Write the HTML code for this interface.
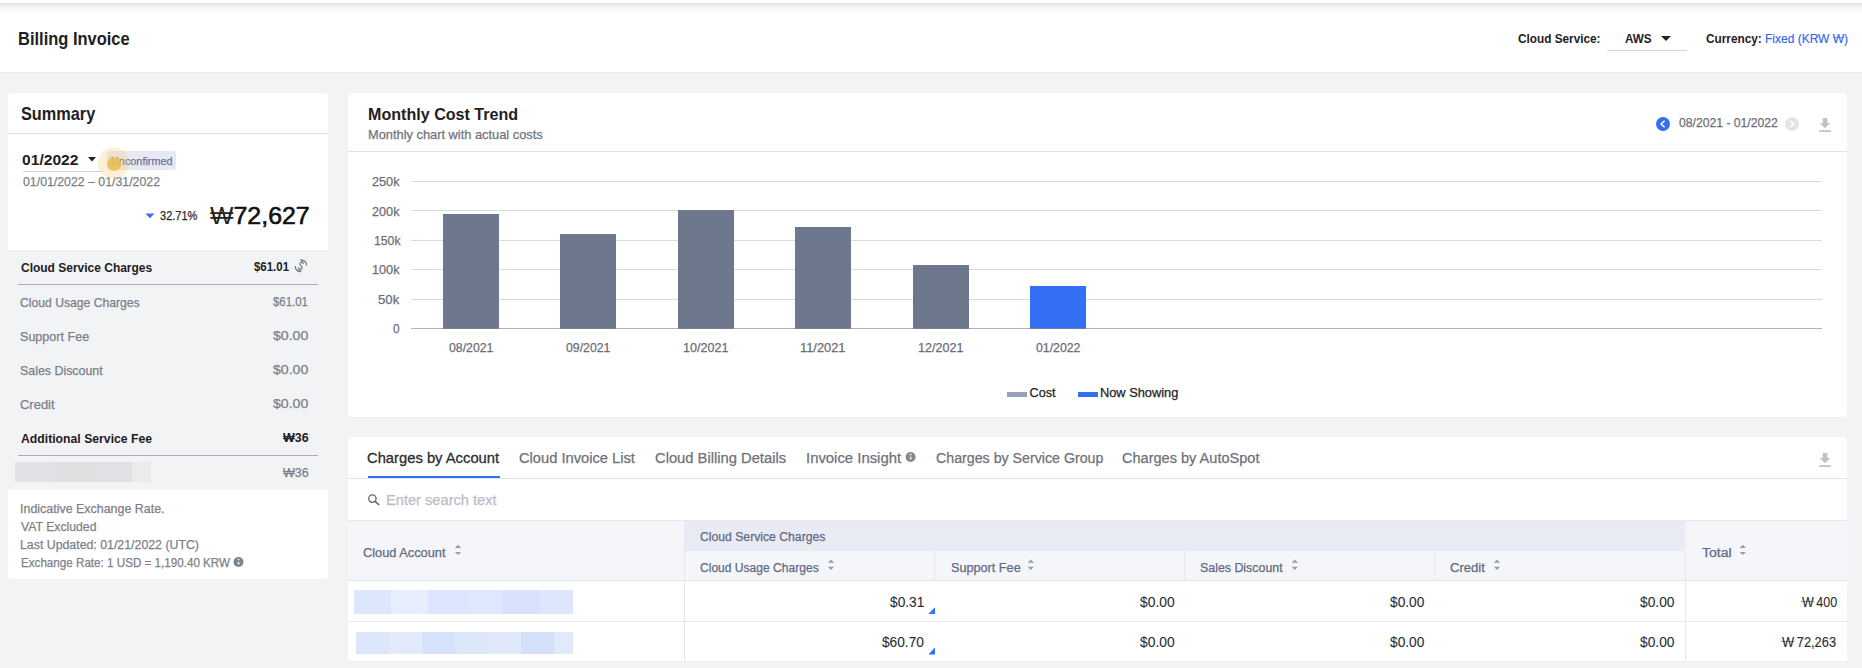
<!DOCTYPE html>
<html><head><meta charset="utf-8"><title>Billing Invoice</title>
<style>
html,body{margin:0;padding:0}
body{width:1862px;height:668px;overflow:hidden;background:#f2f3f5;position:relative;font-family:"Liberation Sans",sans-serif}
.a{position:absolute}
.t{position:absolute;white-space:pre;transform-origin:0 0;font-family:"Liberation Sans",sans-serif}
.card{position:absolute;background:#fff;border-radius:4px}
.hl{position:absolute;height:1px}
svg{position:absolute;overflow:visible}
.won{position:relative}.won::after{content:"";position:absolute;left:-0.04em;right:-0.04em;top:0.47em;border-top:0.6px solid currentColor;opacity:.5}
</style></head><body>
<!-- header -->
<div class="a" style="left:0;top:0;width:1862px;height:72px;background:#fff"></div>
<div class="a" style="left:0;top:3px;width:1862px;height:11px;background:linear-gradient(#e2e2e2,#eeeeee 25%,#f7f7f7 55%,#fdfdfd 85%,#fff)"></div>
<div class="hl" style="left:0;top:72px;width:1862px;background:#e6e8ec"></div>
<div class="hl" style="left:1607px;top:50px;width:80px;background:#cfd4de"></div>
<svg style="left:0;top:0" width="1862" height="72"><path d="M1661 36 L1671 36 L1666 41 Z" fill="#222"/></svg>

<!-- summary card -->
<div class="card" style="left:8px;top:93px;width:320px;height:157px;border-radius:4px 4px 0 0"></div>
<div class="hl" style="left:8px;top:133px;width:320px;background:#dfe2e8"></div>
<div class="hl" style="left:23px;top:171px;width:80px;background:#cdd1da"></div>
<svg style="left:0;top:0" width="340" height="600">
  <path d="M88 157 L96 157 L92 161.5 Z" fill="#222"/>
  <rect x="107" y="151" width="69" height="19" rx="3" fill="#e7eaf4"/>
  <path d="M145.5 213.5 L154.5 213.5 L150 218.3 Z" fill="#3b6ff0"/>
</svg>
<div class="hl" style="left:18px;top:284px;width:300px;background:#a8adb7"></div>
<div class="hl" style="left:18px;top:455px;width:300px;background:#a8adb7"></div>
<svg style="left:0;top:0" width="340" height="600">
  <g transform="translate(300.9 265.8)" fill="none" stroke="#75787e" stroke-width="1.2">
    <path d="M0.6 -5.7 A5.7 5.7 0 0 1 5.7 -0.3"/>
    <path d="M-5.7 0.3 A5.7 5.7 0 0 0 -0.6 5.7"/>
    <path d="M-0.3 -6.4 L2.1 -5.4 L0.3 -4.4 Z" fill="#75787e" stroke-width="0.5"/>
    <path d="M0.3 6.4 L-2.1 5.4 L-0.3 4.4 Z" fill="#75787e" stroke-width="0.5"/>
    <g transform="rotate(20) scale(1.2)" stroke-width="1.0">
      <path d="M1.5 -2.1 C1.2 -2.7 0.6 -2.9 0 -2.9 C-0.9 -2.9 -1.5 -2.4 -1.5 -1.6 C-1.5 -0.6 -0.6 -0.3 0 -0.05 C0.8 0.25 1.6 0.6 1.6 1.5 C1.6 2.4 0.9 2.9 0 2.9 C-0.7 2.9 -1.3 2.6 -1.6 2.0"/>
      <path d="M0 -4 V-2.9 M0 2.9 V4"/>
    </g>
  </g>
</svg>
<div class="a" style="left:15px;top:462px;width:39px;height:20px;background:#e1e2e5"></div>
<div class="a" style="left:54px;top:462px;width:39px;height:20px;background:#dfe0e2"></div>
<div class="a" style="left:93px;top:462px;width:39px;height:20px;background:#e0e1e4"></div>
<div class="a" style="left:132px;top:462px;width:19px;height:20px;background:#eaebed"></div>
<div class="card" style="left:8px;top:490px;width:320px;height:89px;border-radius:0 0 4px 4px"></div>
<svg style="left:0;top:0" width="340" height="600">
  <circle cx="238.5" cy="562" r="5" fill="#80838a"/>
  <rect x="237.8" y="561.9" width="1.5" height="2.6" fill="#fff"/>
  <rect x="237.8" y="558.9" width="1.5" height="1.4" fill="#fff"/>
</svg>

<!-- chart card -->
<div class="card" style="left:348px;top:93px;width:1499px;height:324px"></div>
<div class="hl" style="left:348px;top:151px;width:1499px;background:#dfe2e8"></div>
<svg style="left:0;top:0" width="1862" height="420">
  <g fill="#dadada">
    <rect x="411" y="181" width="1411" height="1"/>
    <rect x="411" y="210" width="1411" height="1"/>
    <rect x="411" y="240" width="1411" height="1"/>
    <rect x="411" y="269" width="1411" height="1"/>
    <rect x="411" y="299" width="1411" height="1"/>
  </g>
  <g fill="#6d788f">
    <rect x="443" y="214" width="56" height="114.5"/>
    <rect x="560" y="234" width="56" height="94.5"/>
    <rect x="678" y="210" width="56" height="118.5"/>
    <rect x="795" y="227" width="56" height="101.5"/>
    <rect x="913" y="265" width="56" height="63.5"/>
  </g>
  <rect x="1030" y="286" width="56" height="42.5" fill="#3370f4"/>
  <rect x="411" y="328" width="1411" height="1" fill="rgba(0,0,0,0.3)"/>
  <rect x="1007" y="392" width="20" height="5" fill="#9aa1b7"/>
  <rect x="1078" y="392" width="20" height="5" fill="#3370f4"/>
  <circle cx="1663" cy="124" r="7" fill="#3370f4"/>
  <path d="M1664.6 120.7 L1661.1 124 L1664.6 127.3" fill="none" stroke="#fff" stroke-width="1.5"/>
  <circle cx="1792" cy="124" r="7" fill="#e3e5e9"/>
  <path d="M1790.5 120.8 L1793.5 124 L1790.5 127.2" fill="none" stroke="#fff" stroke-width="1.4"/>
  <path d="M1822.8 118 H1827.3 V123 H1830.3 L1825 128.3 L1819.7 123 H1822.8 Z" fill="#bfc1c6"/>
  <rect x="1819.2" y="130.2" width="11.6" height="1.7" fill="#bfc1c6"/>
</svg>

<!-- table card -->
<div class="card" style="left:348px;top:437px;width:1499px;height:224px;border-radius:4px 4px 0 0"></div>
<div class="hl" style="left:348px;top:478px;width:1499px;background:#e3e5ec"></div>
<div class="a" style="left:348px;top:661px;width:1499px;height:7px;background:#f4f4f4;border-top:1px solid #f0f0f0;box-sizing:border-box"></div>
<div class="a" style="left:368px;top:476px;width:132px;height:2px;background:#3370f4"></div>
<svg style="left:0;top:0" width="1862" height="668">
  <circle cx="910.6" cy="457" r="5" fill="#85888f"/>
  <rect x="909.9" y="456.8" width="1.5" height="2.6" fill="#fff"/>
  <rect x="909.9" y="453.8" width="1.5" height="1.4" fill="#fff"/>
  <path d="M1822.7 453 H1827.4 V458 H1830.3 L1825 463.3 L1819.7 458 H1822.7 Z" fill="#bfc1c6"/>
  <rect x="1819.2" y="465.2" width="11.6" height="1.8" fill="#bfc1c6"/>
  <circle cx="372.4" cy="498.6" r="3.7" fill="none" stroke="#616469" stroke-width="1.3"/>
  <path d="M375.1 501.4 L379.2 505" stroke="#616469" stroke-width="1.6"/>
</svg>
<!-- table header -->
<div class="a" style="left:348px;top:520px;width:1499px;height:61px;background:#f5f6f9;border-top:1px solid #e6e8ee;border-bottom:1px solid #e3e5eb;box-sizing:border-box"></div>
<div class="a" style="left:685px;top:521px;width:999px;height:30px;background:#e8ebf3"></div>
<div class="a" style="left:684px;top:520px;width:1px;height:141px;background:#e5e7ec"></div>
<div class="a" style="left:934px;top:551px;width:1px;height:29px;background:#e5e7ec"></div>
<div class="a" style="left:1184px;top:551px;width:1px;height:29px;background:#e5e7ec"></div>
<div class="a" style="left:1434px;top:551px;width:1px;height:29px;background:#e5e7ec"></div>
<div class="a" style="left:1685px;top:520px;width:1px;height:141px;background:#e5e7ec"></div>
<div class="hl" style="left:348px;top:621px;width:1499px;background:#e6e8ee"></div>
<svg style="left:0;top:0" width="1862" height="668">
  <g fill="#989eac">
    <path d="M454.8 547.9 L461.2 547.9 L458.00 544.8 Z"/><path d="M454.8 552.0 L461.2 552.0 L458.00 555.1 Z"/>
    <path d="M827.8 562.7 L834.2 562.7 L831.00 559.6 Z"/><path d="M827.8 566.8 L834.2 566.8 L831.00 569.9 Z"/>
    <path d="M1027.6 562.7 L1034.0 562.7 L1030.80 559.6 Z"/><path d="M1027.6 566.8 L1034.0 566.8 L1030.80 569.9 Z"/>
    <path d="M1291.6 562.7 L1298.0 562.7 L1294.80 559.6 Z"/><path d="M1291.6 566.8 L1298.0 566.8 L1294.80 569.9 Z"/>
    <path d="M1493.8 562.7 L1500.2 562.7 L1497.00 559.6 Z"/><path d="M1493.8 566.8 L1500.2 566.8 L1497.00 569.9 Z"/>
    <path d="M1739.6 547.9 L1746.0 547.9 L1742.80 544.8 Z"/><path d="M1739.6 552.0 L1746.0 552.0 L1742.80 555.1 Z"/>
  </g>
  <path d="M928.3 614 L935 614 L935 607.2 Z" fill="#3370f4"/>
  <path d="M928.3 654.4 L935 654.4 L935 647.6 Z" fill="#3370f4"/>
</svg>
<!-- blurred accounts -->
<div class="a" style="left:354px;top:590px;width:37px;height:24px;background:#dce6fc"></div>
<div class="a" style="left:391px;top:590px;width:37px;height:24px;background:#e6edfd"></div>
<div class="a" style="left:428px;top:590px;width:37px;height:24px;background:#dbe5fd"></div>
<div class="a" style="left:465px;top:590px;width:37px;height:24px;background:#dee7fd"></div>
<div class="a" style="left:502px;top:590px;width:37px;height:24px;background:#d8e3fb"></div>
<div class="a" style="left:539px;top:590px;width:34px;height:24px;background:#dde6fd"></div>
<div class="a" style="left:356px;top:632px;width:33px;height:22px;background:#dbe6fb"></div>
<div class="a" style="left:389px;top:632px;width:33px;height:22px;background:#e3eafb"></div>
<div class="a" style="left:422px;top:632px;width:33px;height:22px;background:#d6e2fc"></div>
<div class="a" style="left:455px;top:632px;width:33px;height:22px;background:#dde7fa"></div>
<div class="a" style="left:488px;top:632px;width:33px;height:22px;background:#e0e8fb"></div>
<div class="a" style="left:521px;top:632px;width:33px;height:22px;background:#d4dffa"></div>
<div class="a" style="left:554px;top:632px;width:19px;height:22px;background:#e2e9fb"></div>
<div class="t" style="left:17.81px;top:30.00px;font-size:18.46px;line-height:18.46px;font-weight:700;color:#1f2023;transform:scaleX(0.8935);">Billing Invoice</div>
<div class="t" style="left:1517.70px;top:31.80px;font-size:13.66px;line-height:13.66px;font-weight:700;color:#1f2023;transform:scaleX(0.8628);">Cloud Service:</div>
<div class="t" style="left:1625.00px;top:31.80px;font-size:13.66px;line-height:13.66px;font-weight:700;color:#1f2023;transform:scaleX(0.8548);">AWS</div>
<div class="t" style="left:1705.70px;top:31.70px;font-size:13.66px;line-height:13.66px;font-weight:700;color:#1f2023;transform:scaleX(0.8651);">Currency:</div>
<div class="t" style="left:1764.82px;top:31.70px;font-size:13.66px;line-height:13.66px;font-weight:400;color:#3468ee;transform:scaleX(0.8785);-webkit-text-stroke:0.2px #3468ee">Fixed (KRW <span class="won">W</span>)</div>
<div class="t" style="left:20.58px;top:106.00px;font-size:17.73px;line-height:17.73px;font-weight:700;color:#1f2023;transform:scaleX(0.9187);">Summary</div>
<div class="t" style="left:22.07px;top:151.90px;font-size:15.12px;line-height:15.12px;font-weight:700;color:#1f2023;transform:scaleX(1.0340);">01/2022</div>
<div class="t" style="left:110.66px;top:156.90px;font-size:10.47px;line-height:10.47px;font-weight:400;color:#6d7693;transform:scaleX(1.0379);-webkit-text-stroke:0.25px currentColor">Unconfirmed</div>
<div class="t" style="left:23.40px;top:175.00px;font-size:13.08px;line-height:13.08px;font-weight:400;color:#7c7f87;transform:scaleX(0.9421);-webkit-text-stroke:0.25px currentColor">01/01/2022 – 01/31/2022</div>
<div class="t" style="left:159.78px;top:209.20px;font-size:13.37px;line-height:13.37px;font-weight:400;color:#2a2a2a;transform:scaleX(0.8250);-webkit-text-stroke:0.25px currentColor">32.71%</div>
<div class="t" style="left:209.70px;top:204.00px;font-size:24.71px;line-height:24.71px;font-weight:400;color:#111;transform:scaleX(1.0082);-webkit-text-stroke:0.6px #111"><span style="-webkit-text-stroke:0;color:#222">₩</span>72,627</div>
<div class="t" style="left:20.50px;top:261.00px;font-size:13.08px;line-height:13.08px;font-weight:700;color:#1f2023;transform:scaleX(0.9161);">Cloud Service Charges</div>
<div class="t" style="left:253.80px;top:261.10px;font-size:12.5px;line-height:12.5px;font-weight:700;color:#1f2023;transform:scaleX(0.9158);">$61.01</div>
<div class="t" style="left:19.55px;top:296.70px;font-size:12.79px;line-height:12.79px;font-weight:400;color:#7b7f8a;transform:scaleX(0.9516);-webkit-text-stroke:0.25px currentColor">Cloud Usage Charges</div>
<div class="t" style="left:19.52px;top:330.80px;font-size:12.79px;line-height:12.79px;font-weight:400;color:#7b7f8a;transform:scaleX(0.9826);-webkit-text-stroke:0.25px currentColor">Support Fee</div>
<div class="t" style="left:19.53px;top:364.90px;font-size:12.79px;line-height:12.79px;font-weight:400;color:#7b7f8a;transform:scaleX(0.9702);-webkit-text-stroke:0.25px currentColor">Sales Discount</div>
<div class="t" style="left:20.28px;top:398.60px;font-size:12.79px;line-height:12.79px;font-weight:400;color:#7b7f8a;transform:scaleX(1.0152);-webkit-text-stroke:0.25px currentColor">Credit</div>
<div class="t" style="left:20.50px;top:432.60px;font-size:12.79px;line-height:12.79px;font-weight:700;color:#1f2023;transform:scaleX(0.9562);">Additional Service Fee</div>
<div class="t" style="left:272.90px;top:294.70px;font-size:13.08px;line-height:13.08px;font-weight:400;color:#7b7f8a;transform:scaleX(0.8700);-webkit-text-stroke:0.25px currentColor">$61.01</div>
<div class="t" style="left:273.20px;top:328.70px;font-size:13.08px;line-height:13.08px;font-weight:400;color:#7b7f8a;transform:scaleX(1.0781);-webkit-text-stroke:0.25px currentColor">$0.00</div>
<div class="t" style="left:273.20px;top:362.50px;font-size:13.08px;line-height:13.08px;font-weight:400;color:#7b7f8a;transform:scaleX(1.0781);-webkit-text-stroke:0.25px currentColor">$0.00</div>
<div class="t" style="left:273.20px;top:397.00px;font-size:13.08px;line-height:13.08px;font-weight:400;color:#7b7f8a;transform:scaleX(1.0781);-webkit-text-stroke:0.25px currentColor">$0.00</div>
<div class="t" style="left:282.50px;top:430.60px;font-size:13.08px;line-height:13.08px;font-weight:700;color:#1f2023;transform:scaleX(0.9500);">₩36</div>
<div class="t" style="left:282.50px;top:465.50px;font-size:13.08px;line-height:13.08px;font-weight:400;color:#7b7f8a;transform:scaleX(0.9500);-webkit-text-stroke:0.25px currentColor">₩36</div>
<div class="t" style="left:20.45px;top:502.00px;font-size:13.08px;line-height:13.08px;font-weight:400;color:#7d8087;transform:scaleX(0.9513);-webkit-text-stroke:0.25px currentColor">Indicative Exchange Rate.</div>
<div class="t" style="left:21.40px;top:519.80px;font-size:13.08px;line-height:13.08px;font-weight:400;color:#7d8087;transform:scaleX(0.9350);-webkit-text-stroke:0.25px currentColor">VAT Excluded</div>
<div class="t" style="left:20.46px;top:537.50px;font-size:13.08px;line-height:13.08px;font-weight:400;color:#7d8087;transform:scaleX(0.9431);-webkit-text-stroke:0.25px currentColor">Last Updated: 01/21/2022 (UTC)</div>
<div class="t" style="left:20.51px;top:555.50px;font-size:13.08px;line-height:13.08px;font-weight:400;color:#7d8087;transform:scaleX(0.8897);-webkit-text-stroke:0.25px currentColor">Exchange Rate: 1 USD = 1,190.40 KRW</div>
<div class="t" style="left:368.06px;top:105.90px;font-size:17.15px;line-height:17.15px;font-weight:700;color:#1f2023;transform:scaleX(0.9386);">Monthly Cost Trend</div>
<div class="t" style="left:368.00px;top:128.80px;font-size:12.79px;line-height:12.79px;font-weight:400;color:#6f7380;transform:scaleX(1.0040);-webkit-text-stroke:0.25px currentColor">Monthly chart with actual costs</div>
<div class="t" style="left:1678.60px;top:116.20px;font-size:13.37px;line-height:13.37px;font-weight:400;color:#6c6f76;transform:scaleX(0.9111);-webkit-text-stroke:0.25px currentColor">08/2021 - 01/2022</div>
<div class="t" style="left:372.25px;top:174.90px;font-size:13.37px;line-height:13.37px;font-weight:400;color:#6b6e76;transform:scaleX(0.9500);-webkit-text-stroke:0.25px currentColor">250k</div>
<div class="t" style="left:372.25px;top:204.60px;font-size:13.37px;line-height:13.37px;font-weight:400;color:#6b6e76;transform:scaleX(0.9500);-webkit-text-stroke:0.25px currentColor">200k</div>
<div class="t" style="left:373.69px;top:234.00px;font-size:13.37px;line-height:13.37px;font-weight:400;color:#6b6e76;transform:scaleX(0.9143);-webkit-text-stroke:0.25px currentColor">150k</div>
<div class="t" style="left:372.25px;top:263.40px;font-size:13.37px;line-height:13.37px;font-weight:400;color:#6b6e76;transform:scaleX(0.9500);-webkit-text-stroke:0.25px currentColor">100k</div>
<div class="t" style="left:378.21px;top:293.00px;font-size:13.37px;line-height:13.37px;font-weight:400;color:#6b6e76;transform:scaleX(0.9850);-webkit-text-stroke:0.25px currentColor">50k</div>
<div class="t" style="left:393.30px;top:321.90px;font-size:13.37px;line-height:13.37px;font-weight:400;color:#6b6e76;transform:scaleX(0.8857);-webkit-text-stroke:0.25px currentColor">0</div>
<div class="t" style="left:448.95px;top:341.90px;font-size:12.65px;line-height:12.65px;font-weight:400;color:#6b6e76;transform:scaleX(0.9711);-webkit-text-stroke:0.25px currentColor">08/2021</div>
<div class="t" style="left:566.45px;top:341.90px;font-size:12.65px;line-height:12.65px;font-weight:400;color:#6b6e76;transform:scaleX(0.9711);-webkit-text-stroke:0.25px currentColor">09/2021</div>
<div class="t" style="left:682.96px;top:341.90px;font-size:12.65px;line-height:12.65px;font-weight:400;color:#6b6e76;transform:scaleX(0.9932);-webkit-text-stroke:0.25px currentColor">10/2021</div>
<div class="t" style="left:800.43px;top:341.90px;font-size:12.65px;line-height:12.65px;font-weight:400;color:#6b6e76;transform:scaleX(1.0163);-webkit-text-stroke:0.25px currentColor">11/2021</div>
<div class="t" style="left:917.96px;top:341.90px;font-size:12.65px;line-height:12.65px;font-weight:400;color:#6b6e76;transform:scaleX(0.9932);-webkit-text-stroke:0.25px currentColor">12/2021</div>
<div class="t" style="left:1036.45px;top:341.90px;font-size:12.65px;line-height:12.65px;font-weight:400;color:#6b6e76;transform:scaleX(0.9711);-webkit-text-stroke:0.25px currentColor">01/2022</div>
<div class="t" style="left:1029.60px;top:386.90px;font-size:12.65px;line-height:12.65px;font-weight:400;color:#222;transform:scaleX(1.0000);-webkit-text-stroke:0.25px currentColor">Cost</div>
<div class="t" style="left:1099.99px;top:386.90px;font-size:12.65px;line-height:12.65px;font-weight:400;color:#222;transform:scaleX(1.0132);-webkit-text-stroke:0.25px currentColor">Now Showing</div>
<div class="t" style="left:367.40px;top:450.90px;font-size:14.83px;line-height:14.83px;font-weight:400;color:#2b2d31;transform:scaleX(0.9955);-webkit-text-stroke:0.3px #2b2d31">Charges by Account</div>
<div class="t" style="left:519.31px;top:450.90px;font-size:14.83px;line-height:14.83px;font-weight:400;color:#6e717a;transform:scaleX(0.9905);-webkit-text-stroke:0.25px currentColor">Cloud Invoice List</div>
<div class="t" style="left:654.61px;top:450.90px;font-size:14.83px;line-height:14.83px;font-weight:400;color:#6e717a;transform:scaleX(0.9939);-webkit-text-stroke:0.25px currentColor">Cloud Billing Details</div>
<div class="t" style="left:805.70px;top:450.90px;font-size:14.83px;line-height:14.83px;font-weight:400;color:#6e717a;transform:scaleX(1.0032);-webkit-text-stroke:0.25px currentColor">Invoice Insight</div>
<div class="t" style="left:936.04px;top:450.90px;font-size:14.83px;line-height:14.83px;font-weight:400;color:#6e717a;transform:scaleX(0.9578);-webkit-text-stroke:0.25px currentColor">Charges by Service Group</div>
<div class="t" style="left:1122.42px;top:450.90px;font-size:14.83px;line-height:14.83px;font-weight:400;color:#6e717a;transform:scaleX(0.9806);-webkit-text-stroke:0.25px currentColor">Charges by AutoSpot</div>
<div class="t" style="left:385.62px;top:493.00px;font-size:14.97px;line-height:14.97px;font-weight:400;color:#b9bdc8;transform:scaleX(0.9777);-webkit-text-stroke:0.25px currentColor">Enter search text</div>
<div class="t" style="left:363.43px;top:545.90px;font-size:13.23px;line-height:13.23px;font-weight:400;color:#5e6983;transform:scaleX(0.9679);-webkit-text-stroke:0.25px currentColor">Cloud Account</div>
<div class="t" style="left:700.48px;top:530.00px;font-size:13.23px;line-height:13.23px;font-weight:400;color:#5e6983;transform:scaleX(0.9222);-webkit-text-stroke:0.25px currentColor">Cloud Service Charges</div>
<div class="t" style="left:700.49px;top:560.90px;font-size:13.23px;line-height:13.23px;font-weight:400;color:#5e6983;transform:scaleX(0.9124);-webkit-text-stroke:0.25px currentColor">Cloud Usage Charges</div>
<div class="t" style="left:950.54px;top:561.00px;font-size:13.23px;line-height:13.23px;font-weight:400;color:#5e6983;transform:scaleX(0.9577);-webkit-text-stroke:0.25px currentColor">Support Fee</div>
<div class="t" style="left:1200.36px;top:561.00px;font-size:13.23px;line-height:13.23px;font-weight:400;color:#5e6983;transform:scaleX(0.9368);-webkit-text-stroke:0.25px currentColor">Sales Discount</div>
<div class="t" style="left:1450.41px;top:561.20px;font-size:13.23px;line-height:13.23px;font-weight:400;color:#5e6983;transform:scaleX(0.9882);-webkit-text-stroke:0.25px currentColor">Credit</div>
<div class="t" style="left:1702.30px;top:546.30px;font-size:13.23px;line-height:13.23px;font-weight:400;color:#5e6983;transform:scaleX(1.0630);-webkit-text-stroke:0.25px currentColor">Total</div>
<div class="t" style="left:889.70px;top:595.00px;font-size:14.54px;line-height:14.54px;font-weight:400;color:#2a2c30;transform:scaleX(0.9444);-webkit-text-stroke:0.08px currentColor">$0.31</div>
<div class="t" style="left:1139.80px;top:595.00px;font-size:14.54px;line-height:14.54px;font-weight:400;color:#2a2c30;transform:scaleX(0.9528);-webkit-text-stroke:0.08px currentColor">$0.00</div>
<div class="t" style="left:1389.80px;top:595.00px;font-size:14.54px;line-height:14.54px;font-weight:400;color:#2a2c30;transform:scaleX(0.9444);-webkit-text-stroke:0.08px currentColor">$0.00</div>
<div class="t" style="left:1639.80px;top:595.00px;font-size:14.54px;line-height:14.54px;font-weight:400;color:#2a2c30;transform:scaleX(0.9500);-webkit-text-stroke:0.08px currentColor">$0.00</div>
<div class="t" style="left:1801.66px;top:595.00px;font-size:14.54px;line-height:14.54px;font-weight:400;color:#2a2c30;transform:scaleX(0.8610);-webkit-text-stroke:0.08px currentColor"><span class="won">W</span> 400</div>
<div class="t" style="left:882.20px;top:635.30px;font-size:14.54px;line-height:14.54px;font-weight:400;color:#2a2c30;transform:scaleX(0.9432);-webkit-text-stroke:0.08px currentColor">$60.70</div>
<div class="t" style="left:1139.80px;top:635.30px;font-size:14.54px;line-height:14.54px;font-weight:400;color:#2a2c30;transform:scaleX(0.9528);-webkit-text-stroke:0.08px currentColor">$0.00</div>
<div class="t" style="left:1389.80px;top:635.30px;font-size:14.54px;line-height:14.54px;font-weight:400;color:#2a2c30;transform:scaleX(0.9444);-webkit-text-stroke:0.08px currentColor">$0.00</div>
<div class="t" style="left:1639.80px;top:635.30px;font-size:14.54px;line-height:14.54px;font-weight:400;color:#2a2c30;transform:scaleX(0.9500);-webkit-text-stroke:0.08px currentColor">$0.00</div>
<div class="t" style="left:1782.09px;top:635.30px;font-size:14.54px;line-height:14.54px;font-weight:400;color:#2a2c30;transform:scaleX(0.8855);-webkit-text-stroke:0.08px currentColor"><span class="won">W</span> 72,263</div>
<svg style="left:0;top:0" width="200" height="200">
  <circle cx="113.6" cy="163.2" r="15.8" fill="rgba(246,205,110,0.28)"/>
  <circle cx="114.2" cy="164" r="7.1" fill="rgba(236,188,80,0.85)"/>
</svg>
</body></html>
